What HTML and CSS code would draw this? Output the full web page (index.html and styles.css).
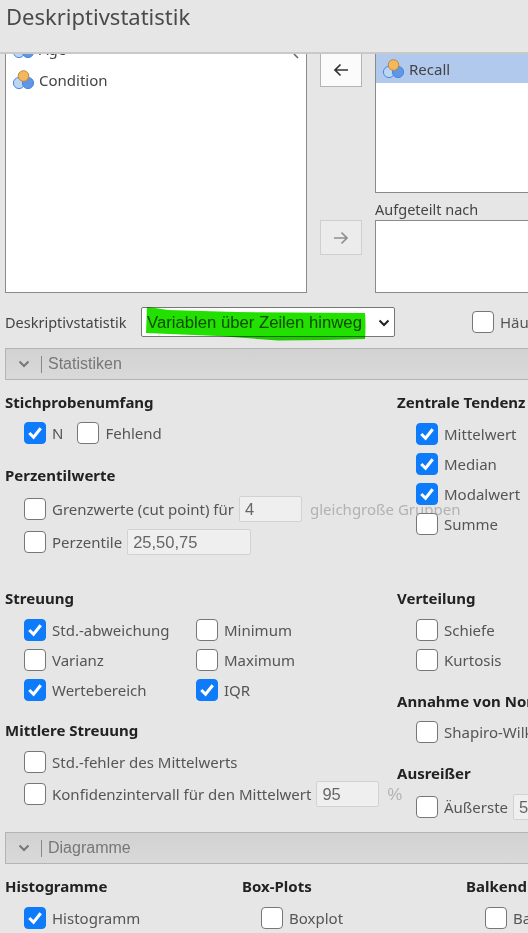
FILE: index.html
```html
<!DOCTYPE html>
<html lang="de">
<head>
<meta charset="utf-8">
<title>Deskriptivstatistik</title>
<link rel="stylesheet" href="styles.css">
</head>
<body>
<svg class="defs" width="0" height="0">
  <defs>
    <symbol id="nominal" viewBox="0 0 22 20">
      <circle cx="7" cy="13" r="5.6" fill="#bcd5f5" stroke="#4a86dc" stroke-width="1"/>
      <circle cx="16" cy="13" r="5.6" fill="#5f97e6" stroke="#4a86dc" stroke-width="1"/>
      <circle cx="11.5" cy="6" r="5.3" fill="#f3b85c" stroke="#b98a3a" stroke-width="1"/>
    </symbol>
    <symbol id="tick" viewBox="0 0 21 21">
      <path d="M4.5 10.5 L9 15 L16.5 5.5" fill="none" stroke="#fff" stroke-width="3.2"/>
    </symbol>
    <symbol id="chev" viewBox="0 0 12 8">
      <path d="M1.5 1.5 L6 6 L10.5 1.5" fill="none" stroke="currentColor" stroke-width="2"/>
    </symbol>
  </defs>
</svg>
<div class="page">
  <header class="title">Deskriptivstatistik</header>

  <section class="supplier">
    <div class="list source">
      <div class="var clipped"><svg class="vicon"><use href="#nominal"/></svg><span>Age</span></div>
      <div class="var"><svg class="vicon"><use href="#nominal"/></svg><span>Condition</span></div>
      <svg class="search" width="6" height="5" viewBox="0 0 6 5"><path d="M1 0 L5 4" fill="none" stroke="#666" stroke-width="1.6"/></svg>
    </div>
    <div class="movers">
      <div class="mover"><svg width="16" height="14" viewBox="0 0 16 14"><path d="M15 7 H2 M7.5 1.5 L2 7 L7.5 12.5" fill="none" stroke="#333" stroke-width="1.7"/></svg></div>
      <div class="mover off"><svg width="16" height="14" viewBox="0 0 16 14"><path d="M1 7 H14 M8.5 1.5 L14 7 L8.5 12.5" fill="none" stroke="#8f8f8f" stroke-width="1.7"/></svg></div>
    </div>
    <div class="targets">
      <div class="list vars">
        <div class="var selected"><svg class="vicon"><use href="#nominal"/></svg><span>Recall</span></div>
      </div>
      <div class="target-label">Aufgeteilt nach</div>
      <div class="list split"></div>
    </div>
  </section>

  <section class="mode">
    <label class="mode-label">Deskriptivstatistik</label>
    <div class="select">
      <span>Variablen über Zeilen hinweg</span>
      <svg class="select-chev"><use href="#chev"/></svg>
      <svg class="scribble" width="222" height="35" viewBox="0 0 222 35"><path d="M1 0 Q10 1 22 3 L90 5 L219 6 Q220 19 219 32 L180 33 L132 33.5 L72 29 L0 26 Z" fill="#22e000"/></svg>
    </div>
    <div class="check mode-check"><span class="box"></span><span>Häufigkeitstabellen</span></div>
  </section>

  <div class="section-head"><svg class="head-chev"><use href="#chev"/></svg><span class="head-text">Statistiken</span></div>

  <section class="stats">
    <div class="col left">
      <h3 class="h-first">Stichprobenumfang</h3>
      <div class="rowline">
        <div class="check"><span class="box on"><svg><use href="#tick"/></svg></span><span>N</span></div>
        <div class="check"><span class="box"></span><span>Fehlend</span></div>
      </div>
      <h3 class="h-perz">Perzentilwerte</h3>
      <div class="check cut"><span class="box"></span><span>Grenzwerte (cut point) für</span><span class="input w63">4</span><span class="muted">gleichgroße Gruppen</span></div>
      <div class="check perc"><span class="box"></span><span>Perzentile</span><span class="input w124">25,50,75</span></div>
      <h3 class="h-streu">Streuung</h3>
      <div class="grid2">
        <div class="check"><span class="box on"><svg><use href="#tick"/></svg></span><span>Std.-abweichung</span></div>
        <div class="check"><span class="box"></span><span>Minimum</span></div>
        <div class="check"><span class="box"></span><span>Varianz</span></div>
        <div class="check"><span class="box"></span><span>Maximum</span></div>
        <div class="check"><span class="box on"><svg><use href="#tick"/></svg></span><span>Wertebereich</span></div>
        <div class="check"><span class="box on"><svg><use href="#tick"/></svg></span><span>IQR</span></div>
      </div>
      <h3 class="h-mitt">Mittlere Streuung</h3>
      <div class="check sem"><span class="box"></span><span>Std.-fehler des Mittelwerts</span></div>
      <div class="check ci"><span class="box"></span><span>Konfidenzintervall für den Mittelwert</span><span class="input w62">95</span><span class="muted pct">%</span></div>
    </div>
    <div class="col right">
      <h3 class="h-first">Zentrale Tendenz</h3>
      <div class="stack">
        <div class="check"><span class="box on"><svg><use href="#tick"/></svg></span><span>Mittelwert</span></div>
        <div class="check"><span class="box on"><svg><use href="#tick"/></svg></span><span>Median</span></div>
        <div class="check"><span class="box on"><svg><use href="#tick"/></svg></span><span>Modalwert</span></div>
        <div class="check"><span class="box"></span><span>Summe</span></div>
      </div>
      <h3 class="h-vert">Verteilung</h3>
      <div class="stack">
        <div class="check"><span class="box"></span><span>Schiefe</span></div>
        <div class="check"><span class="box"></span><span>Kurtosis</span></div>
      </div>
      <h3 class="h-annahme">Annahme von Normalität</h3>
      <div class="check single"><span class="box"></span><span>Shapiro-Wilk</span></div>
      <h3 class="h-aus">Ausreißer</h3>
      <div class="check extreme"><span class="box"></span><span>Äußerste</span><span class="input w62">5</span></div>
    </div>
  </section>

  <div class="section-head second"><svg class="head-chev"><use href="#chev"/></svg><span class="head-text">Diagramme</span></div>

  <section class="plots">
    <div class="plot p1"><h3>Histogramme</h3><div class="check"><span class="box on"><svg><use href="#tick"/></svg></span><span>Histogramm</span></div></div>
    <div class="plot p2"><h3>Box-Plots</h3><div class="check"><span class="box"></span><span>Boxplot</span></div></div>
    <div class="plot p3"><h3>Balkendiagramm</h3><div class="check"><span class="box"></span><span>Balkendiagramm</span></div></div>
  </section>
</div>
</body>
</html>
```

FILE: styles.css
```css
* { box-sizing: border-box; }
html, body { margin: 0; padding: 0; }
body {
  width: 528px;
  height: 933px;
  overflow: hidden;
  background: #e6e6e6;
  color: #444;
  font-family: "Noto Sans", "Open Sans", sans-serif;
  font-size: 15px;
}
.defs { display: block; height: 0; }
.page { width: 528px; overflow: hidden; }

.title {
  height: 54px;
  padding: 0 0 0 6px;
  font-size: 22px;
  line-height: 32px;
  color: #4a4a4a;
  border-bottom: 2px solid #c9c9c9;
}

.supplier {
  display: flex;
  height: 239px;
  padding-left: 5px;
  width: 700px;
}
.list { background: #fff; border: 1px solid #8a8a8a; overflow: hidden; }
.source { position: relative; width: 302px; height: 239px; border-top: 0; }
.search { position: absolute; right: 7px; top: 0; }
.var { display: flex; align-items: center; height: 32px; padding-left: 6px; gap: 5px; color: #444; }
.var span { line-height: 20px; }
.clipped { margin-top: -20px; height: 30px; margin-bottom: 0; }
.vicon { width: 22px; height: 20px; flex: none; }
.movers { width: 42px; margin-left: 13px; display: flex; flex-direction: column; flex: none; }
.mover {
  width: 42px;
  height: 33px;
  background: #fbfbfb;
  border: 1px solid #b4b4b4;
  border-top: 0;
  display: flex;
  align-items: center;
  justify-content: center;
}
.mover.off { height: 35px; margin-top: 133px; background: #ececec; border: 1px solid #cfcfcf; }
.targets { margin-left: 13px; width: 300px; }
.vars { height: 139px; border-top: 0; }
.selected { background: #b1c9ec; height: 29px; }
.target-label { height: 27px; padding-top: 6px; line-height: 20px; font-size: 14.5px; color: #444; }
.split { height: 73px; }

.mode {
  display: flex;
  align-items: center;
  height: 30px;
  margin-top: 14px;
  padding-left: 5px;
  width: 800px;
}
.mode-label { width: 136px; font-size: 14.5px; white-space: nowrap; }
.select {
  position: relative;
  width: 254px;
  height: 30px;
  background: #fff;
  border: 1px solid #777;
  border-radius: 2px;
  display: flex;
  align-items: center;
  padding: 2px 0 0 5px;
  font-family: "Liberation Sans", Arial, sans-serif;
  font-size: 16.7px;
  color: #555;
}
.select-chev { width: 12px; height: 8px; position: absolute; right: 4px; top: 11px; color: #222; }
.scribble { position: absolute; left: 4px; top: -1px; mix-blend-mode: multiply; overflow: visible; }
.mode-check { margin-left: 77px; }

.section-head {
  display: flex;
  align-items: center;
  height: 32px;
  width: 540px;
  margin: 11px 0 0 5px;
  background: linear-gradient(#d2d2d2, #d9d9d9);
  border: 1px solid #b4b4b4;
  color: #777;
}
.section-head.second { margin-top: 0; }
.head-chev { width: 12px; height: 8px; margin-left: 12px; color: #777; flex: none; }
.head-text {
  padding-left: 6px;
  border-left: 1px solid #888;
  height: 17px;
  display: flex;
  align-items: center;
  font-family: "Liberation Sans", Arial, sans-serif;
  font-size: 16px;
  margin-left: 11px;
}

h3 { margin: 0; font-size: 15px; font-weight: 700; line-height: 20px; color: #222; white-space: nowrap; }

.check { display: flex; align-items: center; height: 22px; white-space: nowrap; color: #555; }
.box {
  width: 22px;
  height: 22px;
  flex: none;
  margin-right: 6px;
  background: #fff;
  border: 1px solid #777;
  border-radius: 4px;
}
.box.on { background: #0d7bfa; border-color: #0d7bfa; }
.box.on svg { display: block; width: 20px; height: 20px; }

.stats { display: flex; width: 700px; height: 452px; }
.col { flex: none; }
.left { width: 397px; padding-left: 5px; }
.right { width: 300px; }
.left .check, .stack .check, .right > .check { margin-left: 19px; }

.h-first { margin-top: 12px; }
.rowline { display: flex; margin-top: 10px; }
.left .rowline .check { margin-left: 19px; }
.left .rowline .check + .check { margin-left: 14px; }
.h-perz { margin-top: 21px; }
.cut { margin-top: 13px; }
.perc { margin-top: 11px; }
.input {
  display: flex;
  align-items: center;
  height: 26px;
  padding-left: 5px;
  margin-left: 5px;
  background: #efefef;
  border: 1px solid #d2d2d2;
  border-radius: 2px;
  font-family: "Liberation Sans", Arial, sans-serif;
  font-size: 16.5px;
  color: #666;
  flex: none;
}
.w63 { width: 63px; }
.w124 { width: 124px; }
.w62 { width: 63px; }
.muted { margin-left: 8px; color: #b2b2b2; }
.h-streu { margin-top: 35px; }
.grid2 {
  display: grid;
  grid-template-columns: 172px 172px;
  row-gap: 8px;
  margin-top: 11px;
}
.h-mitt { margin-top: 19px; }
.sem { margin-top: 11px; }
.ci { margin-top: 10px; }
.pct { font-family: "Liberation Sans", Arial, sans-serif; font-size: 16.5px; }

.stack { display: flex; flex-direction: column; gap: 8px; margin-top: 11px; }
.h-vert { margin-top: 53px; }
.h-annahme { margin-top: 20px; }
.single { margin-top: 10px; }
.h-aus { margin-top: 20px; }
.extreme { margin-top: 13px; }

.plots { display: flex; width: 700px; padding-left: 5px; }
.plot { flex: none; }
.plot h3 { margin-top: 12px; }
.plot .check { margin: 11px 0 0 19px; }
.p1 { width: 237px; }
.p2 { width: 224px; }
```
